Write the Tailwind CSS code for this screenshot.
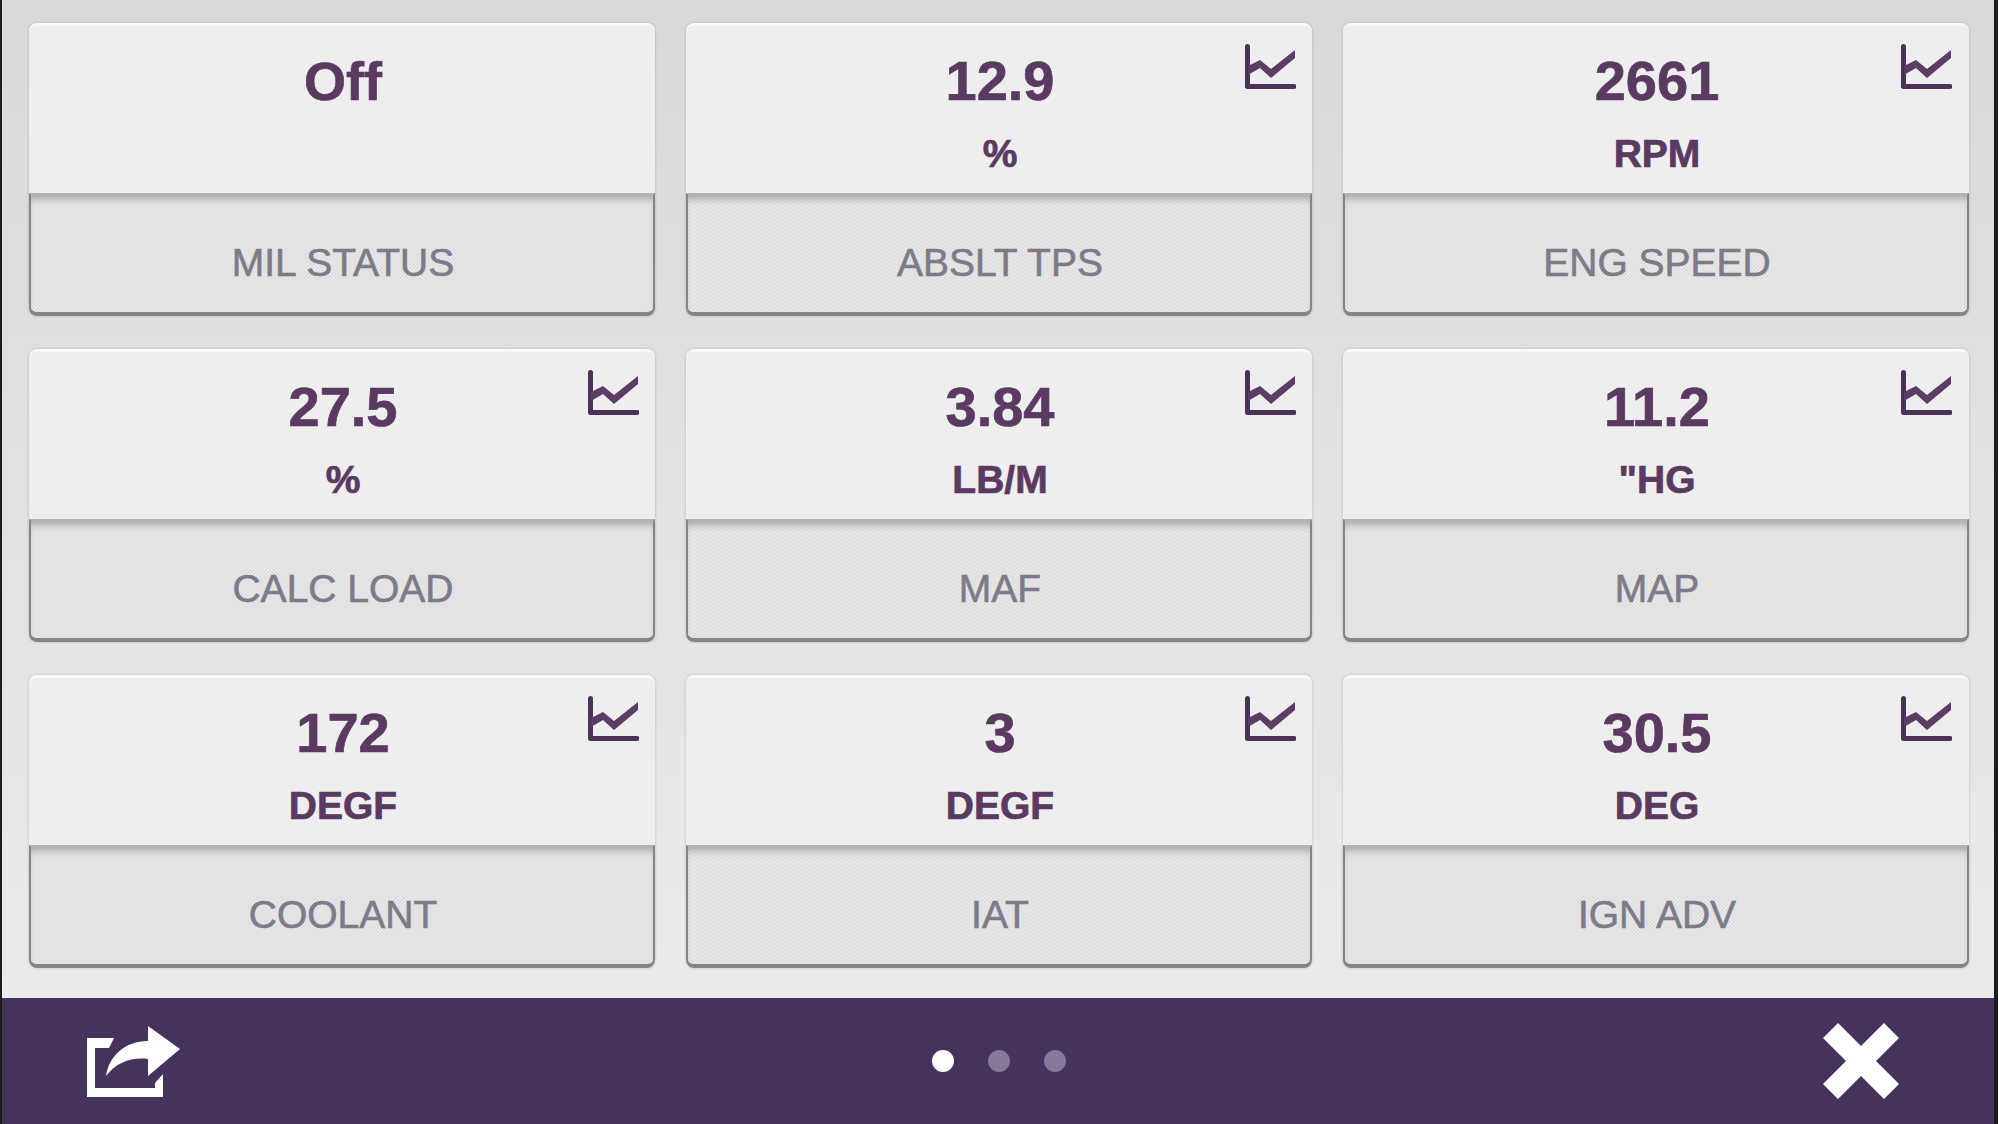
<!DOCTYPE html>
<html lang="en">
<head>
    <meta charset="UTF-8">
    <meta name="viewport" content="width=device-width, initial-scale=1.0">
    <title>Gauges</title>
    <script src="https://cdn.jsdelivr.net/npm/@tailwindcss/browser@4"></script>
</head>
<body class="h-screen overflow-hidden font-['Liberation_Sans',Arial,sans-serif]">
    <svg class="hidden">
        <symbol id="chart" viewBox="0 0 51 45">
            <path d="M2.5 2.5V42.5H49" fill="none" stroke="#4c3258" stroke-width="5" stroke-linecap="round" stroke-linejoin="round"/>
            <path d="M3 22L15 16L26 25L50 6V14L26 34L15 24L3 31Z" fill="#5b3d66"/>
        </symbol>
    </svg>

    <div class="flex h-full flex-col border-l-2 border-r-4 border-l-[#1c1c1c] border-r-[#1c1c1c]">
        <!-- Gauge grid -->
        <main class="grid h-[997px] grid-cols-[626px_626px_626px] content-start gap-x-[31px] gap-y-[33px] bg-linear-to-b from-[#d9d9d9] to-[#ebebeb] pl-[27px] pt-[23px]">

            <div class="flex h-[293px] flex-col rounded-lg shadow-[0_0_3px_rgba(0,0,0,0.2)]">
                <div class="h-[170px] rounded-t-lg border-t-[3px] border-[#f8f8f8] bg-[#eeeeee] pl-[2px] pt-[25px] text-center font-bold text-[#5b3a62] [-webkit-text-stroke:0.7px_#5b3a62]">
                    <div class="h-[60px] text-[54px] leading-[60px]">Off</div>
                </div>
                <div class="flex-1 rounded-b-lg border-x-2 border-b-4 border-[#858585] border-t-2 border-t-[#b4b4b4] bg-[repeating-conic-gradient(#dfdfdf_0%_25%,#e7e7e7_0%_50%)] bg-[length:4px_4px] pl-[2px] pt-[44px] text-center text-[39px] leading-[48px] text-[#7d7b89] shadow-[inset_0_8px_8px_-5px_rgba(0,0,0,0.3)] [-webkit-text-stroke:0.6px_#7d7b89]">MIL STATUS</div>
            </div>

            <div class="relative flex h-[293px] flex-col rounded-lg shadow-[0_0_3px_rgba(0,0,0,0.2)]">
                <svg class="absolute right-[16px] top-[21px] h-[45px] w-[51px]"><use href="#chart"/></svg>
                <div class="h-[170px] rounded-t-lg border-t-[3px] border-[#f8f8f8] bg-[#eeeeee] pl-[2px] pt-[25px] text-center font-bold text-[#5b3a62] [-webkit-text-stroke:0.7px_#5b3a62]">
                    <div class="h-[60px] text-[56px] leading-[60px]">12.9</div>
                    <div class="mt-[20px] text-[39px] leading-[46px]">%</div>
                </div>
                <div class="flex-1 rounded-b-lg border-x-2 border-b-4 border-[#858585] border-t-2 border-t-[#b4b4b4] bg-[repeating-conic-gradient(#dfdfdf_0%_25%,#e7e7e7_0%_50%)] bg-[length:4px_4px] pl-[2px] pt-[44px] text-center text-[39px] leading-[48px] text-[#7d7b89] shadow-[inset_0_8px_8px_-5px_rgba(0,0,0,0.3)] [-webkit-text-stroke:0.6px_#7d7b89]">ABSLT TPS</div>
            </div>

            <div class="relative flex h-[293px] flex-col rounded-lg shadow-[0_0_3px_rgba(0,0,0,0.2)]">
                <svg class="absolute right-[17px] top-[21px] h-[45px] w-[51px]"><use href="#chart"/></svg>
                <div class="h-[170px] rounded-t-lg border-t-[3px] border-[#f8f8f8] bg-[#eeeeee] pl-[2px] pt-[25px] text-center font-bold text-[#5b3a62] [-webkit-text-stroke:0.7px_#5b3a62]">
                    <div class="h-[60px] text-[56px] leading-[60px]">2661</div>
                    <div class="mt-[20px] text-[39px] leading-[46px]">RPM</div>
                </div>
                <div class="flex-1 rounded-b-lg border-x-2 border-b-4 border-[#858585] border-t-2 border-t-[#b4b4b4] bg-[repeating-conic-gradient(#dfdfdf_0%_25%,#e7e7e7_0%_50%)] bg-[length:4px_4px] pl-[2px] pt-[44px] text-center text-[39px] leading-[48px] text-[#7d7b89] shadow-[inset_0_8px_8px_-5px_rgba(0,0,0,0.3)] [-webkit-text-stroke:0.6px_#7d7b89]">ENG SPEED</div>
            </div>

            <div class="relative flex h-[293px] flex-col rounded-lg shadow-[0_0_3px_rgba(0,0,0,0.2)]">
                <svg class="absolute right-[16px] top-[21px] h-[45px] w-[51px]"><use href="#chart"/></svg>
                <div class="h-[170px] rounded-t-lg border-t-[3px] border-[#f8f8f8] bg-[#eeeeee] pl-[2px] pt-[25px] text-center font-bold text-[#5b3a62] [-webkit-text-stroke:0.7px_#5b3a62]">
                    <div class="h-[60px] text-[56px] leading-[60px]">27.5</div>
                    <div class="mt-[20px] text-[39px] leading-[46px]">%</div>
                </div>
                <div class="flex-1 rounded-b-lg border-x-2 border-b-4 border-[#858585] border-t-2 border-t-[#b4b4b4] bg-[repeating-conic-gradient(#dfdfdf_0%_25%,#e7e7e7_0%_50%)] bg-[length:4px_4px] pl-[2px] pt-[44px] text-center text-[39px] leading-[48px] text-[#7d7b89] shadow-[inset_0_8px_8px_-5px_rgba(0,0,0,0.3)] [-webkit-text-stroke:0.6px_#7d7b89]">CALC LOAD</div>
            </div>

            <div class="relative flex h-[293px] flex-col rounded-lg shadow-[0_0_3px_rgba(0,0,0,0.2)]">
                <svg class="absolute right-[16px] top-[21px] h-[45px] w-[51px]"><use href="#chart"/></svg>
                <div class="h-[170px] rounded-t-lg border-t-[3px] border-[#f8f8f8] bg-[#eeeeee] pl-[2px] pt-[25px] text-center font-bold text-[#5b3a62] [-webkit-text-stroke:0.7px_#5b3a62]">
                    <div class="h-[60px] text-[56px] leading-[60px]">3.84</div>
                    <div class="mt-[20px] text-[39px] leading-[46px]">LB/M</div>
                </div>
                <div class="flex-1 rounded-b-lg border-x-2 border-b-4 border-[#858585] border-t-2 border-t-[#b4b4b4] bg-[repeating-conic-gradient(#dfdfdf_0%_25%,#e7e7e7_0%_50%)] bg-[length:4px_4px] pl-[2px] pt-[44px] text-center text-[39px] leading-[48px] text-[#7d7b89] shadow-[inset_0_8px_8px_-5px_rgba(0,0,0,0.3)] [-webkit-text-stroke:0.6px_#7d7b89]">MAF</div>
            </div>

            <div class="relative flex h-[293px] flex-col rounded-lg shadow-[0_0_3px_rgba(0,0,0,0.2)]">
                <svg class="absolute right-[17px] top-[21px] h-[45px] w-[51px]"><use href="#chart"/></svg>
                <div class="h-[170px] rounded-t-lg border-t-[3px] border-[#f8f8f8] bg-[#eeeeee] pl-[2px] pt-[25px] text-center font-bold text-[#5b3a62] [-webkit-text-stroke:0.7px_#5b3a62]">
                    <div class="h-[60px] text-[56px] leading-[60px]">11.2</div>
                    <div class="mt-[20px] text-[39px] leading-[46px]">"HG</div>
                </div>
                <div class="flex-1 rounded-b-lg border-x-2 border-b-4 border-[#858585] border-t-2 border-t-[#b4b4b4] bg-[repeating-conic-gradient(#dfdfdf_0%_25%,#e7e7e7_0%_50%)] bg-[length:4px_4px] pl-[2px] pt-[44px] text-center text-[39px] leading-[48px] text-[#7d7b89] shadow-[inset_0_8px_8px_-5px_rgba(0,0,0,0.3)] [-webkit-text-stroke:0.6px_#7d7b89]">MAP</div>
            </div>

            <div class="relative flex h-[293px] flex-col rounded-lg shadow-[0_0_3px_rgba(0,0,0,0.2)]">
                <svg class="absolute right-[16px] top-[21px] h-[45px] w-[51px]"><use href="#chart"/></svg>
                <div class="h-[170px] rounded-t-lg border-t-[3px] border-[#f8f8f8] bg-[#eeeeee] pl-[2px] pt-[25px] text-center font-bold text-[#5b3a62] [-webkit-text-stroke:0.7px_#5b3a62]">
                    <div class="h-[60px] text-[56px] leading-[60px]">172</div>
                    <div class="mt-[20px] text-[39px] leading-[46px]">DEGF</div>
                </div>
                <div class="flex-1 rounded-b-lg border-x-2 border-b-4 border-[#858585] border-t-2 border-t-[#b4b4b4] bg-[repeating-conic-gradient(#dfdfdf_0%_25%,#e7e7e7_0%_50%)] bg-[length:4px_4px] pl-[2px] pt-[44px] text-center text-[39px] leading-[48px] text-[#7d7b89] shadow-[inset_0_8px_8px_-5px_rgba(0,0,0,0.3)] [-webkit-text-stroke:0.6px_#7d7b89]">COOLANT</div>
            </div>

            <div class="relative flex h-[293px] flex-col rounded-lg shadow-[0_0_3px_rgba(0,0,0,0.2)]">
                <svg class="absolute right-[16px] top-[21px] h-[45px] w-[51px]"><use href="#chart"/></svg>
                <div class="h-[170px] rounded-t-lg border-t-[3px] border-[#f8f8f8] bg-[#eeeeee] pl-[2px] pt-[25px] text-center font-bold text-[#5b3a62] [-webkit-text-stroke:0.7px_#5b3a62]">
                    <div class="h-[60px] text-[56px] leading-[60px]">3</div>
                    <div class="mt-[20px] text-[39px] leading-[46px]">DEGF</div>
                </div>
                <div class="flex-1 rounded-b-lg border-x-2 border-b-4 border-[#858585] border-t-2 border-t-[#b4b4b4] bg-[repeating-conic-gradient(#dfdfdf_0%_25%,#e7e7e7_0%_50%)] bg-[length:4px_4px] pl-[2px] pt-[44px] text-center text-[39px] leading-[48px] text-[#7d7b89] shadow-[inset_0_8px_8px_-5px_rgba(0,0,0,0.3)] [-webkit-text-stroke:0.6px_#7d7b89]">IAT</div>
            </div>

            <div class="relative flex h-[293px] flex-col rounded-lg shadow-[0_0_3px_rgba(0,0,0,0.2)]">
                <svg class="absolute right-[17px] top-[21px] h-[45px] w-[51px]"><use href="#chart"/></svg>
                <div class="h-[170px] rounded-t-lg border-t-[3px] border-[#f8f8f8] bg-[#eeeeee] pl-[2px] pt-[25px] text-center font-bold text-[#5b3a62] [-webkit-text-stroke:0.7px_#5b3a62]">
                    <div class="h-[60px] text-[56px] leading-[60px]">30.5</div>
                    <div class="mt-[20px] text-[39px] leading-[46px]">DEG</div>
                </div>
                <div class="flex-1 rounded-b-lg border-x-2 border-b-4 border-[#858585] border-t-2 border-t-[#b4b4b4] bg-[repeating-conic-gradient(#dfdfdf_0%_25%,#e7e7e7_0%_50%)] bg-[length:4px_4px] pl-[2px] pt-[44px] text-center text-[39px] leading-[48px] text-[#7d7b89] shadow-[inset_0_8px_8px_-5px_rgba(0,0,0,0.3)] [-webkit-text-stroke:0.6px_#7d7b89]">IGN ADV</div>
            </div>
        </main>

        <!-- Bottom bar -->
        <footer class="grid flex-1 grid-cols-3 items-center border-t border-[#f4eef4] bg-[#45325d] pl-[85px] pr-[83px]">
            <svg class="h-[71px] w-[93px]" viewBox="0 0 93 71" fill="#ffffff">
                <path d="M0 12H27L22 22H8V62H68V57L76 48V71H0Z"/>
                <path d="M61 0L93 23L61 50V33C45 31 30 36 19 50C22 30 38 15 61 15Z"/>
            </svg>
            <div class="flex items-center justify-center gap-[34px]">
                <span class="size-[22px] rounded-full bg-white"></span>
                <span class="size-[22px] rounded-full bg-[#85789a]"></span>
                <span class="size-[22px] rounded-full bg-[#85789a]"></span>
            </div>
            <svg class="mr-[12px] h-[76px] w-[76px] justify-self-end" viewBox="0 0 76 76" fill="#ffffff">
                <polygon points="15,0 38,23 61,0 76,15 53,38 76,61 61,76 38,53 15,76 0,61 23,38 0,15"/>
            </svg>
        </footer>
    </div>
</body>
</html>
